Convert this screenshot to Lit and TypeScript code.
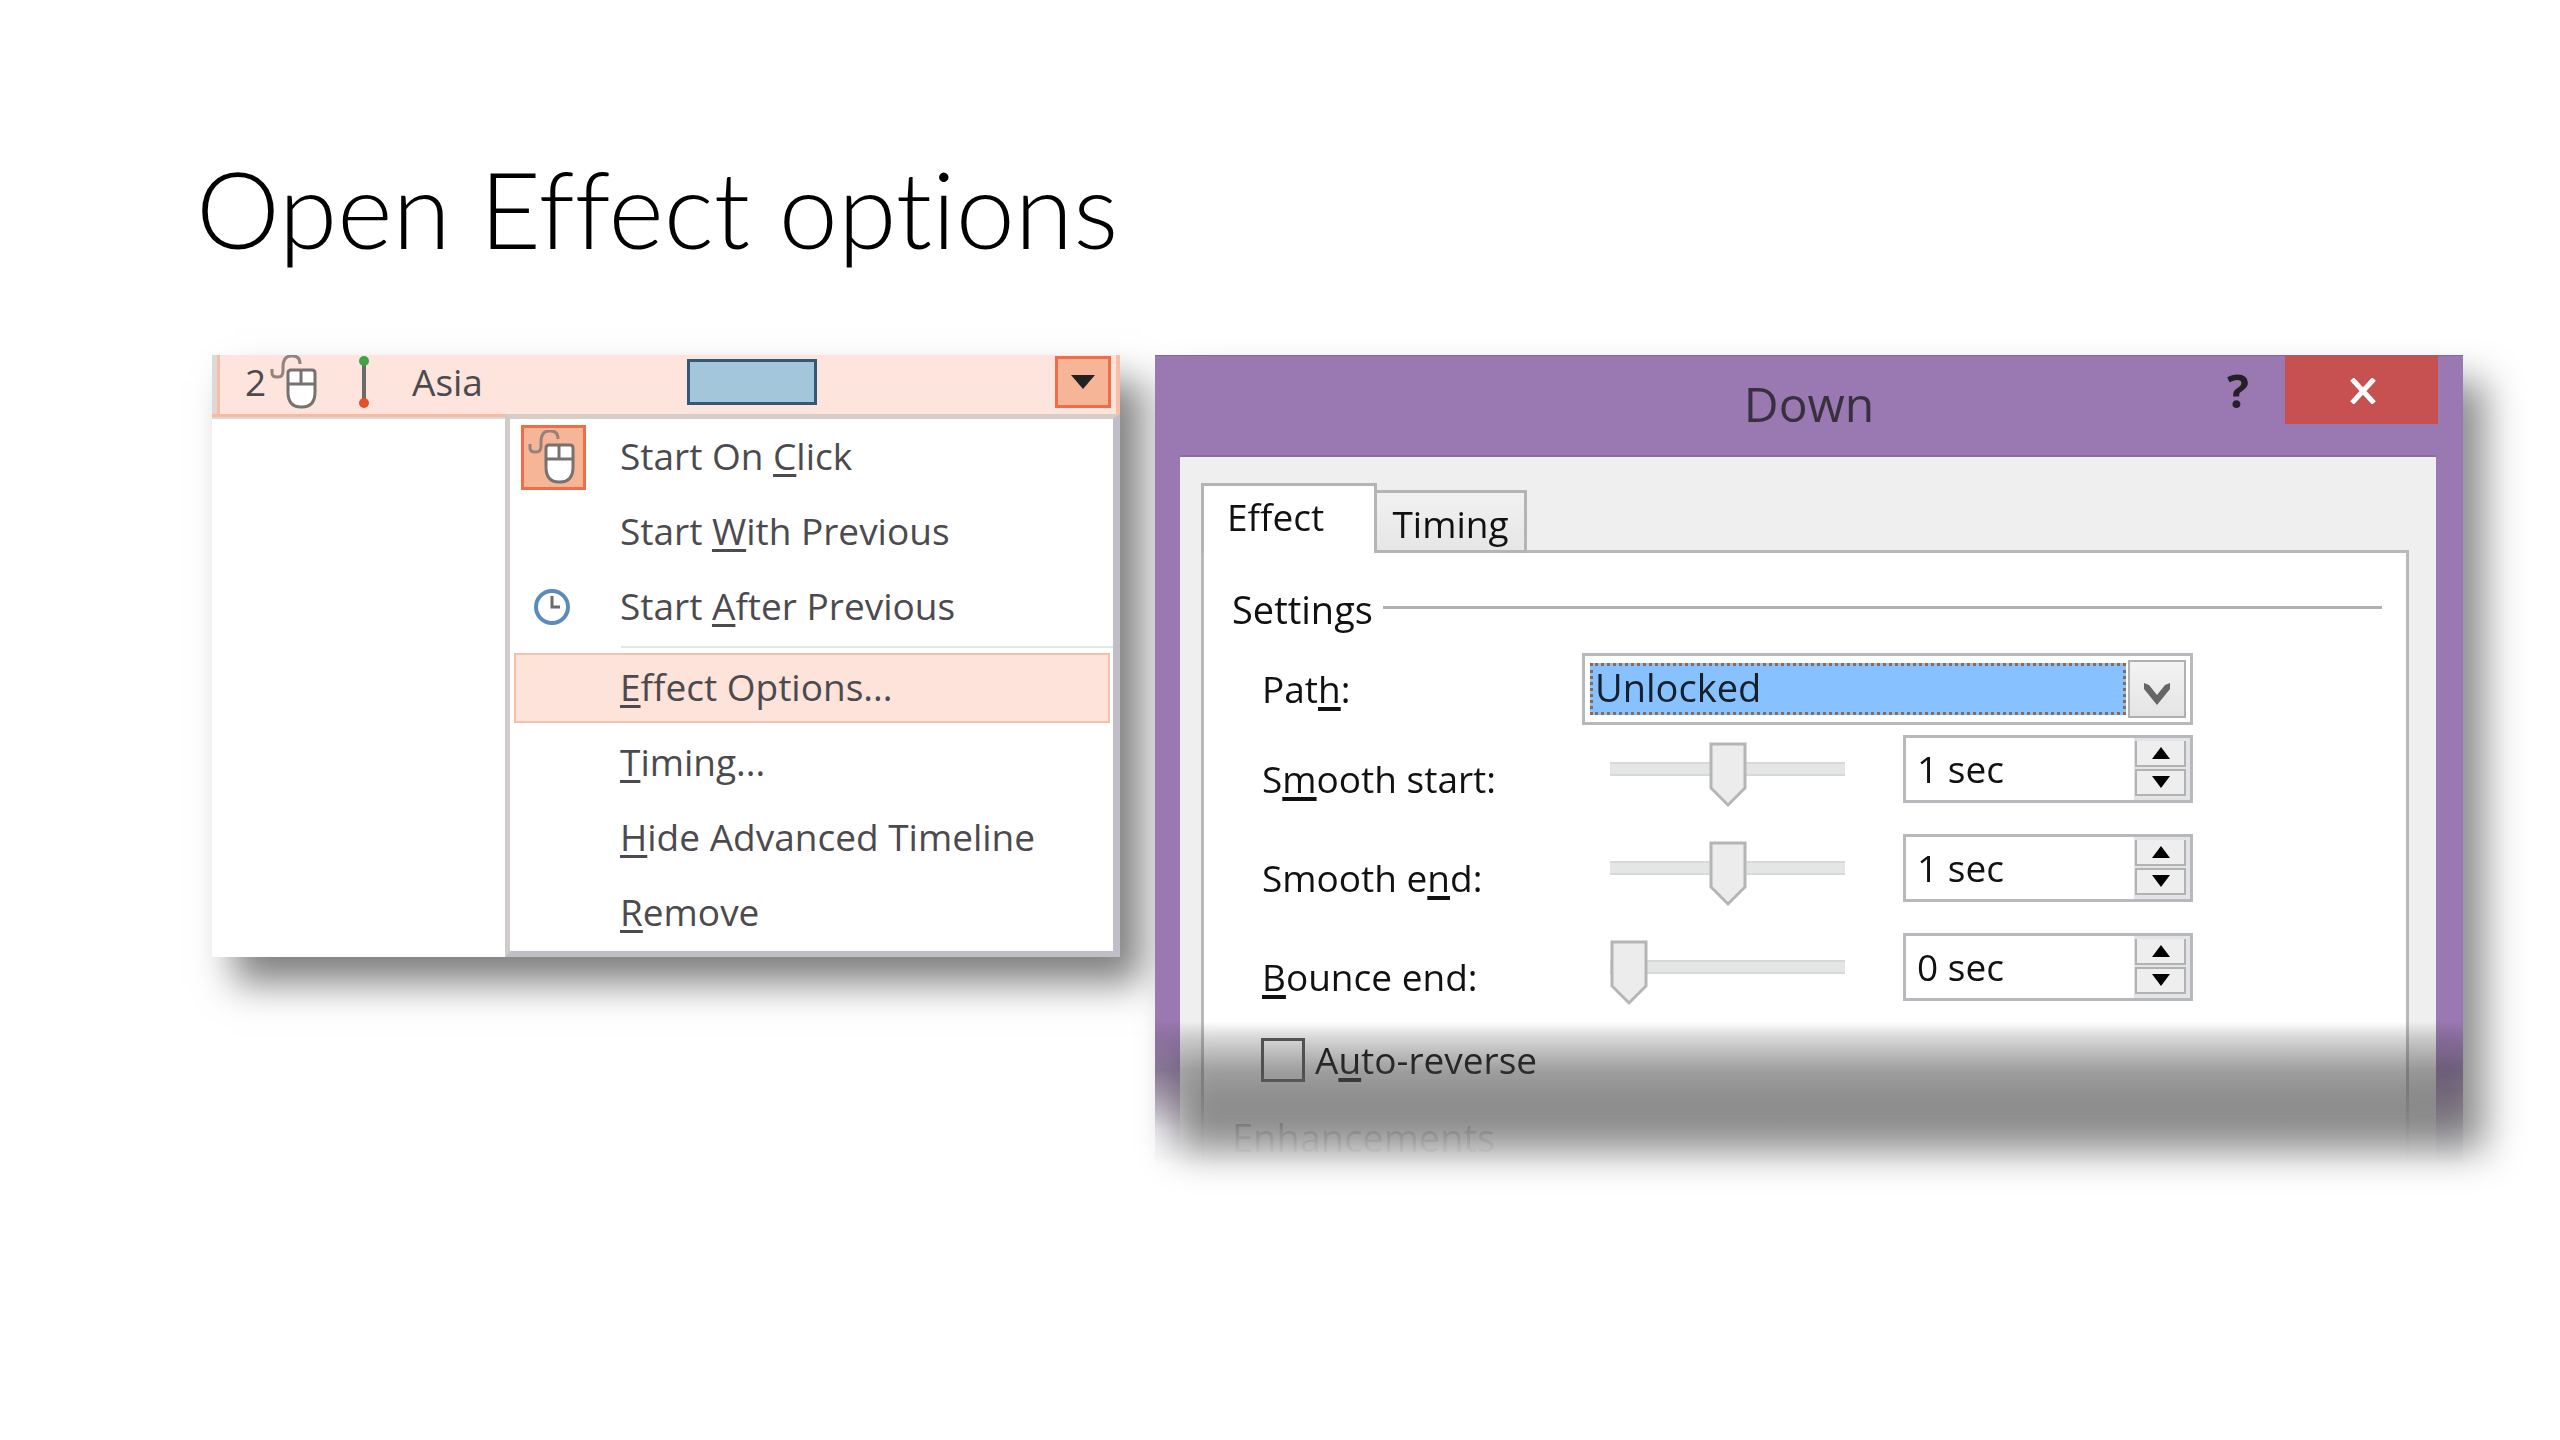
import { LitElement, html, css, nothing } from "lit";
import { customElement, state } from "lit/decorators.js";

const mouseIcon = html`<svg class="mouse" viewBox="0 0 48 54" width="48" height="54" aria-hidden="true">
  <path d="M2 14v4q0 4 5 4h1q5 0 5-6v-4q0-11 8-11h2q7 0 7 8" fill="none" stroke="#94827c" stroke-width="3"></path>
  <path d="M18 18q0-3 3-3h21q3 0 3 3v19q0 15-13 15h-1q-13 0-13-15z" fill="#fff" stroke="#77716f" stroke-width="3"></path>
  <path d="M18 29h27M31 15v14" fill="none" stroke="#77716f" stroke-width="3"></path>
</svg>`;

const clockIcon = html`<svg viewBox="0 0 40 40" width="40" height="40" aria-hidden="true">
  <circle cx="20" cy="20" r="16" fill="#fff" stroke="#5b8bbb" stroke-width="4"></circle>
  <path d="M20 9v11h8" fill="none" stroke="#6b6b6b" stroke-width="3"></path>
</svg>`;

/* Splits "Start On &Click" into plain text with its access key underlined. */
const accessText = (text: string) => {
  const at = text.indexOf("&");
  if (at < 0) return html`${text}`;
  return html`${text.slice(0, at)}<span class="key">${text[at + 1]}</span>${text.slice(at + 2)}`;
};

@customElement("effect-menu")
export class EffectMenu extends LitElement {
  static styles = css`
    :host { display: block; color: #4c4a4e; font: 37px/48px "Open Sans", "Noto Sans", sans-serif; background: #fff; box-shadow: 22px 26px 36px rgba(0, 0, 0, 0.5); }
    .row { display: flex; align-items: center; height: 59px; box-sizing: border-box; padding: 0 5px 5px 25px; background: #fde4dc; border-right: 4px solid #f9bfa6; }
    .frame { border-left: 5px solid #dcd9d7; }
    .edge { border-left: 3px solid #f7bda5; }
    .number { width: 25px; }
    .mouse { flex: none; display: block; }
    .motion { flex: none; margin: 0 39px 0 37px; }
    .name { flex: 0 1 275px; }
    .bar { flex: none; width: 130px; height: 46px; box-sizing: border-box; background: #a3c6da; border: 3px solid #325a78; }
    .drop { margin-left: auto; width: 56px; height: 52px; padding: 0; background: #f7b597; border: 3px solid #f16d49; display: grid; place-items: center; }
    .body { display: flex; }
    .blank { flex: 0 0 293px; box-sizing: border-box; border-top: 3px solid #f7b99f; background: #fff; }
    .blank::before { content: ""; display: block; height: 2px; background: #dcd8d5; }
    .menu { flex: 1; margin: 0; padding: 0 0 1px; list-style: none; border: 5px solid #cfcccb; border-top-color: #d6cdc8; border-right: 7px solid #c0bec8; border-bottom: 6px solid #c0bfc9; background: #fff; }
    .entry { padding: 3px 3px 2px 4px; }
    .divided { border-top: 3px solid #fff; position: relative; padding-top: 6px; }
    .divided::before { content: ""; position: absolute; top: -1px; left: 111px; right: 0; height: 2px; background: #e1e6e6; }
    .item { display: flex; align-items: center; gap: 34px; width: 100%; height: 70px; box-sizing: border-box; padding: 0 5px; border: 2px solid transparent; background: none; color: inherit; font: inherit; text-align: left; }
    .current { background: #fde3da; border-color: #f8c0a6; }
    .icon { flex: none; width: 65px; height: 65px; box-sizing: border-box; padding-right: 4px; display: grid; place-items: center; }
    .picked { background: #f7b597; border: 3px solid #f16d49; }
    .label { padding-bottom: 2px; }
    .key { text-decoration: underline; text-decoration-thickness: 3px; text-underline-offset: 4px; text-decoration-skip-ink: none; }
  `;

  private items = [
    { text: "Start On &Click", icon: mouseIcon, picked: true },
    { text: "Start &With Previous" },
    { text: "Start &After Previous", icon: clockIcon },
    { text: "&Effect Options...", current: true },
    { text: "&Timing..." },
    { text: "&Hide Advanced Timeline" },
    { text: "&Remove" },
  ] as { text: string; icon?: unknown; picked?: boolean; current?: boolean }[];

  render() {
    return html`
      <div class="frame"><div class="edge"><div class="row">
        <span class="number">2</span>
        ${mouseIcon}
        <svg class="motion" viewBox="0 0 18 54" width="18" height="54" aria-hidden="true">
          <path d="M9 6v40" stroke="#6b6b6b" stroke-width="4"></path>
          <circle cx="9" cy="6" r="5" fill="#3fa447"></circle>
          <circle cx="9" cy="48" r="5" fill="#e2502f"></circle>
        </svg>
        <span class="name">Asia</span>
        <span class="bar"></span>
        <button class="drop" aria-label="Open menu">
          <svg viewBox="0 0 24 14" width="24" height="14"><path d="M0 0h24L12 14z" fill="#222"></path></svg>
        </button>
      </div></div></div>
      <div class="body">
        <div class="blank"></div>
        <ul class="menu">
          ${this.items.map((i) => html`<li class="entry ${i.current ? "divided" : ""}">
            <button class="item ${i.current ? "current" : ""}">
              <span class="icon ${i.picked ? "picked" : ""}">${i.icon ?? nothing}</span>
              <span class="label">${accessText(i.text)}</span>
            </button>
          </li>`)}
        </ul>
      </div>`;
  }
}

@customElement("effect-dialog")
export class EffectDialog extends LitElement {
  static styles = css`
    :host { display: block; position: relative; color: #111; font: 37px/48px "Open Sans", "Noto Sans", sans-serif; }
    /* The shadow lies under the whole window, so that it shows where the window fades out. */
    .shade { position: absolute; inset: 26px -22px 14px 22px; background: rgba(0, 0, 0, 0.45); filter: blur(19px); }
    .window { position: relative; display: flex; flex-direction: column; height: 810px; overflow: hidden; background: #9a78b2; -webkit-mask-image: linear-gradient(#000 calc(100% - 140px), rgba(0, 0, 0, 0.75) calc(100% - 95px), rgba(0, 0, 0, 0.5) calc(100% - 70px), rgba(0, 0, 0, 0.12) calc(100% - 35px), transparent); mask-image: linear-gradient(#000 calc(100% - 140px), rgba(0, 0, 0, 0.75) calc(100% - 95px), rgba(0, 0, 0, 0.5) calc(100% - 70px), rgba(0, 0, 0, 0.12) calc(100% - 35px), transparent); }
    .window::after { content: ""; position: absolute; inset: auto 0 0; height: 144px; pointer-events: none; background: linear-gradient(transparent, rgba(0, 0, 0, 0.13) 16px, rgba(0, 0, 0, 0.24) 34px, rgba(0, 0, 0, 0.35) 49px, rgba(0, 0, 0, 0.42) 74px, rgba(0, 0, 0, 0.45) 100px, rgba(0, 0, 0, 0.3)); }
    .titlebar { flex: none; display: grid; grid-template-columns: 1fr auto 1fr; height: 102px; box-sizing: border-box; border-top: 1px solid #83659d; }
    .title { grid-column: 2; margin: 0; padding-top: 18px; font-size: 48px; line-height: 60px; font-weight: 400; color: #38303f; }
    .controls { display: flex; justify-content: flex-end; align-items: flex-start; padding-right: 25px; }
    .help { width: 64px; height: 68px; margin-right: 15px; padding: 0; border: 0; background: none; font: 700 46px/68px "Open Sans", sans-serif; color: #242026; }
    .close { width: 153px; height: 68px; padding: 2px 0 0 2px; border: 0; background: #c75050; display: grid; place-items: center; }
    .client { flex: 1; display: flex; flex-direction: column; margin: 0 27px 0 25px; padding: 26px 27px 0 21px; background: #efefef; box-shadow: 0 -2px #8d6aa4; }
    .tabs { position: relative; display: flex; align-items: flex-end; margin-bottom: -3px; }
    .tab { box-sizing: border-box; padding: 7px 0 0; border: 3px solid #b4b4b4; font: inherit; color: #111; display: flex; align-items: flex-start; }
    .on { width: 176px; height: 70px; padding-left: 23px; background: #fff; border-bottom: 0; }
    .off { width: 150px; height: 63px; justify-content: center; border-left: 0; background: linear-gradient(#f1f1f1, #e6e6e6); }
    .pane { flex: 1; padding: 32px 24px 0 28px; background: #fff; border: 3px solid #b9b9b9; border-bottom: 0; }
    .heading { display: flex; align-items: center; gap: 10px; margin: 0 0 20px; font: inherit; font-size: 38px; }
    .ruled::after { content: ""; flex: 1; height: 3px; margin-bottom: 3px; background: #b0b0b0; }
    .form { display: flex; flex-direction: column; gap: 31px; padding-left: 30px; }
    .path { display: grid; grid-template-columns: 320px 611px; align-items: center; margin-bottom: -21px; }
    .setting { display: grid; grid-template-columns: 320px 321px 290px; align-items: center; }
    .lower { padding-top: 20px; }
    .combo { display: flex; height: 72px; box-sizing: border-box; padding: 4px 4px 4px 5px; gap: 2px; border: 3px solid #b6b8bb; background: #fff; }
    .select { flex: 1; min-width: 0; height: 52px; margin: 3px 0; padding: 0 0 3px 2px; appearance: none; border: 3px dotted #8a6a50; border-radius: 0; background: #88c1ff; color: #14202c; font: inherit; font-size: 38px; line-height: 43px; outline: 0; }
    .arrow { flex: none; width: 58px; height: 58px; box-sizing: border-box; border: 2px solid #b0b0b0; background: linear-gradient(#f3f3f3, #e4e4e4); display: grid; place-items: center; padding-top: 9px; }
    .range { appearance: none; width: 235px; height: 14px; margin: 0 0 0 28px; background: none; }
    .range::-webkit-slider-runnable-track { height: 14px; box-sizing: border-box; border: 2px solid #d6d9d8; border-width: 2px 0; background: #e4e6e5; }
    .range::-webkit-slider-thumb { appearance: none; width: 38px; height: 66px; margin-top: -22px; background: url("data:image/svg+xml,%3Csvg xmlns='http://www.w3.org/2000/svg' width='38' height='66'%3E%3Cpath d='M2 2h34v44L19 63 2 46z' fill='%23ececec' stroke='%23b5b5b5' stroke-width='3'/%3E%3C/svg%3E"); }
    .spin { display: grid; grid-template-columns: 1fr 51px; height: 68px; box-sizing: border-box; border: 3px solid #b6b8bb; background: linear-gradient(90deg, #fff calc(100% - 56px), #e3e4e6 0); }
    .value { grid-row: 1 / 3; min-width: 0; width: 100%; box-sizing: border-box; padding: 0 0 0 11px; border: 0; background: none; font: inherit; color: inherit; outline: 0; }
    .steps { grid-row: 1 / 3; width: 51px; display: flex; flex-direction: column; gap: 2px; padding: 3px 4px 4px 0; margin-left: -4px; }
    .step { flex: 1; min-height: 0; width: 51px; padding: 0; border: 2px solid #b2b2b2; border-top: 0; background: #eee; display: grid; place-items: center; }
    .down { border-top: 2px solid #b2b2b2; }
    .check { display: flex; align-items: center; gap: 10px; margin: 35px 0 29px 29px; }
    .box { appearance: none; width: 44px; height: 44px; box-sizing: border-box; margin: 0; border: 3px solid #5a5a5a; background: none; }
    .key { text-decoration: underline; text-decoration-thickness: 4px; text-underline-offset: 4px; text-decoration-skip-ink: none; }
  `;

  @state() private settings = [
    { id: "start", text: "S&mooth start:", pos: 50, value: "1 sec" },
    { id: "end", text: "Smooth e&nd:", pos: 50, value: "1 sec" },
    { id: "bounce", text: "&Bounce end:", pos: 0, value: "0 sec" },
  ];

  render() {
    return html`
      <div class="shade"></div>
      <section class="window">
        <header class="titlebar">
          <h2 class="title">Down</h2>
          <div class="controls">
            <button class="help" aria-label="Help">?</button>
            <button class="close" aria-label="Close">
              <svg viewBox="0 0 28 26" width="28" height="26"><path d="M3 1l22 24M25 1L3 25" stroke="#fff" stroke-width="5"></path></svg>
            </button>
          </div>
        </header>
        <div class="client">
          <div class="tabs" role="tablist">
            <button class="tab on" role="tab" aria-selected="true">Effect</button>
            <button class="tab off" role="tab" aria-selected="false">Timing</button>
          </div>
          <div class="pane">
            <h3 class="heading ruled">Settings</h3>
            <div class="form">
              <div class="path">
                <label for="path">${accessText("Pat&h:")}</label>
                <div class="combo">
                  <select class="select" id="path"><option>Unlocked</option></select>
                  <span class="arrow"><svg viewBox="0 0 26 22" width="26" height="22"><path d="M0 0l5 2 8 10 8-10 5-2v6L13 22 0 6z" fill="#666"></path></svg></span>
                </div>
              </div>
              ${this.settings.map((s) => html`<div class="setting">
                <label class="lower" for=${s.id}>${accessText(s.text)}</label>
                <input class="range" type="range" min="0" max="100" .value=${String(s.pos)} aria-label=${s.text.replace("&", "")}>
                <div class="spin">
                  <input class="value" id=${s.id} type="text" .value=${s.value}>
                  <div class="steps">
                    <button class="step" aria-label="Increase"><svg viewBox="0 0 18 12" width="18" height="12"><path d="M0 12L9 0l9 12z"></path></svg></button>
                    <button class="step down" aria-label="Decrease"><svg viewBox="0 0 18 12" width="18" height="12"><path d="M0 0h18L9 12z"></path></svg></button>
                  </div>
                </div>
              </div>`)}
            </div>
            <div class="check">
              <input class="box" id="auto" type="checkbox">
              <label for="auto">${accessText("A&uto-reverse")}</label>
            </div>
            <h3 class="heading">Enhancements</h3>
          </div>
        </div>
      </section>`;
  }
}

@customElement("app-root")
export class AppRoot extends LitElement {
  static styles = css`
    :host { display: block; min-height: 100vh; background: #fff; }
    .slide { padding: 132px 97px 0 212px; }
    .title { margin: 0 0 71px -16px; font: 300 106px/152px Lato, "Open Sans", sans-serif; font-variant-ligatures: none; color: #000; }
    .figures { display: grid; grid-template-columns: 908fr 1308fr; gap: 35px; align-items: start; }
  `;

  render() {
    return html`<main class="slide">
      <h1 class="title">Open Effect options</h1>
      <div class="figures">
        <effect-menu></effect-menu>
        <effect-dialog></effect-dialog>
      </div>
    </main>`;
  }
}
